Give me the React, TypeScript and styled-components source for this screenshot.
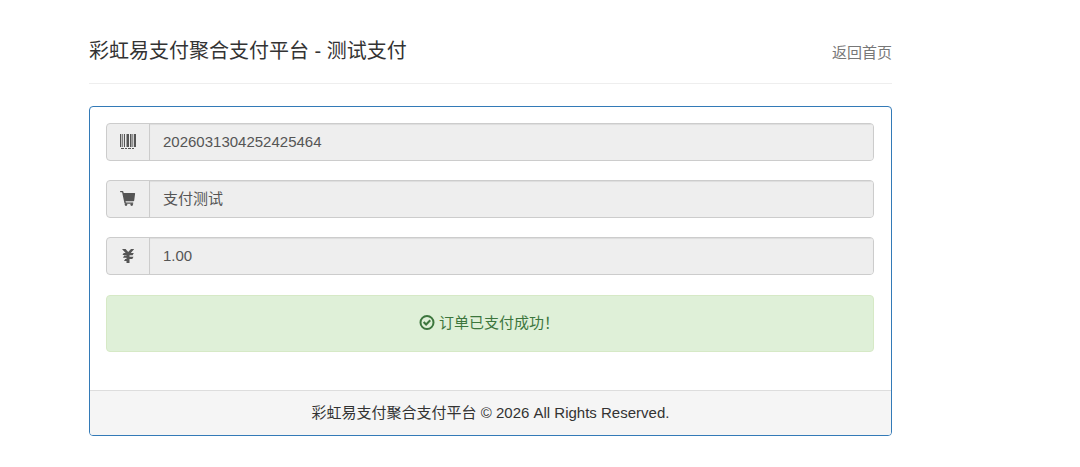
import React from 'react';
import styled, { createGlobalStyle } from 'styled-components';

const GlobalStyle = createGlobalStyle`
  *, *::before, *::after { box-sizing: border-box; }
  body {
    margin: 0;
    background: #fff;
    color: #333;
    font-family: "Liberation Sans", "Noto Sans CJK SC", sans-serif;
    font-size: 15px;
    line-height: 22px;
  }
`;

const Page = styled.div`
  padding: 34px 188px 31px 89px;
`;

const Header = styled.header`
  display: flex;
  justify-content: space-between;
  align-items: baseline;
  padding-bottom: 15px;
  margin-bottom: 22px;
  border-bottom: 1px solid #eee;
`;

const Title = styled.h1`
  margin: 0;
  font-size: 20px;
  font-weight: 400;
  line-height: 34px;
`;

const HomeLink = styled.a`
  color: #777;
  text-decoration: none;
`;

const Panel = styled.section`
  border: 1px solid #337ab7;
  border-radius: 4px;
  overflow: hidden;
`;

const PanelBody = styled.div`
  padding: 16px 17px 38px 16px;
`;

const Fields = styled.div`
  display: flex;
  flex-direction: column;
  gap: 19px;
  margin-bottom: 20px;
`;

const InputGroup = styled.div`
  display: flex;
  height: 38px;
  border: 1px solid #ccc;
  border-radius: 4px;
  background: #eee;
  overflow: hidden;
`;

const Addon = styled.label`
  display: flex;
  align-items: center;
  justify-content: center;
  width: 42px;
  flex: none;
  color: #555;
`;

const Input = styled.input`
  flex: 1;
  min-width: 0;
  padding: 0 13px;
  border: 0;
  border-left: 1px solid #ccc;
  outline: 0;
  background: #eee;
  box-shadow: inset 0 1px 1px rgba(0, 0, 0, 0.075);
  color: #555;
  font: inherit;
`;

const Alert = styled.div`
  display: flex;
  align-items: center;
  justify-content: center;
  gap: 4px;
  padding: 16px 18px 17px 16px;
  border: 1px solid #d6e9c6;
  border-radius: 4px;
  background: #dff0d8;
  color: #3c763d;
`;

const Footer = styled.footer`
  padding: 11px 16px;
  border-top: 1px solid #ddd;
  background: #f5f5f5;
  text-align: center;
`;

const Icon = styled.svg`
  display: block;
  width: 16px;
  height: 16px;
  flex: none;
  fill: currentColor;
`;

const BarcodeIcon = () => (
  <Icon viewBox="0 0 16 16" aria-hidden="true">
    <path d="M0 0h1.300v13H0zM2.300 0h.8v13h-.8zM4 0h1v13H4zM6.500 0h2.500v13H6.500zM10 0h1.500v13H10zM12.400 0h.8v13h-.8zM14 0h2v13h-2zM1 14h3v1H1zM5 14h2v1H5zM8 14h3v1H8zM12 14h2v1h-2z" />
  </Icon>
);

const CartIcon = () => (
  <Icon viewBox="0 0 16 16" aria-hidden="true">
    <path d="M0 .6Q0 0 .6 0h2q.5 0 .7.5L3.700 2H14.500q.7 0 .6.8l-.9 6.700q-.1.7-.8.700H5.500l.4 1.300h7.300v1.200H5.100q-.5 0-.7-.6L2.100 1.200H.6Q0 1.200 0 .6z" />
    <circle cx="6" cy="13.600" r="1.300" />
    <circle cx="11.700" cy="13.600" r="1.300" />
  </Icon>
);

const YenIcon = () => (
  <Icon viewBox="0 0 16 16" aria-hidden="true">
    <path d="M2 1h3.600l2.600 3L11 1h3.200L10.800 5h3l-1.200 2.200H9.500v1.600h4L12.300 11H9.500v4h-3v-2H4l1.200-2h1.300V9.700H3l1.200-2.200h2.300V7H2.500l1.200-2h1.900z" />
  </Icon>
);

const OkIcon = () => (
  <Icon viewBox="0 0 16 16" aria-hidden="true">
    <circle cx="8" cy="7.500" r="6.500" fill="none" stroke="currentColor" strokeWidth="2" />
    <path d="M3.900 7.800l1.500-1.500 1.700 1.700 3.400-3.500L12 6 7.100 11z" />
  </Icon>
);

const fields = [
  { id: 'trade-no', label: '订单号', value: '2026031304252425464', Glyph: BarcodeIcon },
  { id: 'goods', label: '商品名称', value: '支付测试', Glyph: CartIcon },
  { id: 'money', label: '金额', value: '1.00', Glyph: YenIcon },
];

export default function App() {
  return (
    <>
      <GlobalStyle />
      <Page>
        <Header>
          <Title>彩虹易支付聚合支付平台 - 测试支付</Title>
          <HomeLink href="#">返回首页</HomeLink>
        </Header>
        <Panel>
          <PanelBody>
            <Fields>
              {fields.map(({ id, label, value, Glyph }) => (
                <InputGroup key={id}>
                  <Addon htmlFor={id} aria-label={label}>
                    <Glyph />
                  </Addon>
                  <Input id={id} type="text" aria-label={label} defaultValue={value} readOnly />
                </InputGroup>
              ))}
            </Fields>
            <Alert role="status">
              <OkIcon />
              订单已支付成功！
            </Alert>
          </PanelBody>
          <Footer>彩虹易支付聚合支付平台 © 2026 All Rights Reserved.</Footer>
        </Panel>
      </Page>
    </>
  );
}
